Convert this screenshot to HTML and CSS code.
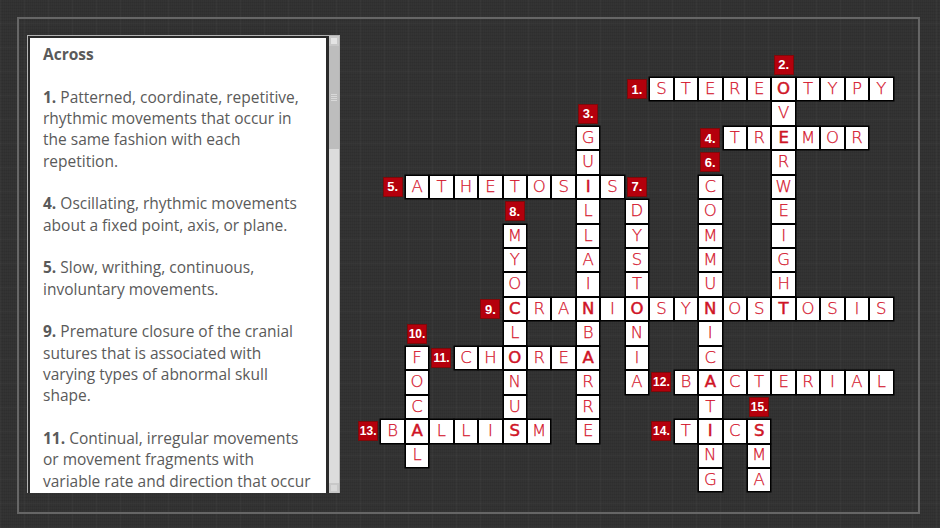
FILE: index.html
```html
<!DOCTYPE html>
<html lang="en">
<head>
    <meta charset="UTF-8">
    <meta name="viewport" content="width=device-width, initial-scale=1.0">
    <title>Crossword</title>
    <link rel="stylesheet" href="styles.css">
</head>
<body>
    <div class="chalkboard">
        <div class="frame">
            <div class="clues">
                <div class="clue-text">
                    <p><b>Across</b></p>
                    <p><b>1.</b> Patterned, coordinate, repetitive, rhythmic movements that occur in the same fashion with each repetition.</p>
                    <p><b>4.</b> Oscillating, rhythmic movements about a fixed point, axis, or plane.</p>
                    <p><b>5.</b> Slow, writhing, continuous, involuntary movements.</p>
                    <p><b>9.</b> Premature closure of the cranial sutures that is associated with varying types of abnormal skull shape.</p>
                    <p><b>11.</b> Continual, irregular movements or movement fragments with variable rate and direction that occur</p>
                </div>
                <div class="scrollbar">
                    <div class="scroll-btn"></div>
                    <div class="scroll-thumb"><span class="grip"></span></div>
                    <div class="scroll-track"></div>
                    <div class="scroll-btn end"></div>
                </div>
            </div>

            <div class="board">
                <span class="num r2 c12">1.</span>
                <span class="num r1 c18">2.</span>
                <span class="num r3 c10">3.</span>
                <span class="num r4 c15">4.</span>
                <span class="num r6 c2">5.</span>
                <span class="num r5 c15">6.</span>
                <span class="num r6 c12">7.</span>
                <span class="num r7 c7">8.</span>
                <span class="num r11 c6">9.</span>
                <span class="num r12 c3">10.</span>
                <span class="num r13 c4">11.</span>
                <span class="num r14 c13">12.</span>
                <span class="num r16 c1">13.</span>
                <span class="num r16 c13">14.</span>
                <span class="num r15 c17">15.</span>

                <span class="cell r2 c13">S</span><span class="cell r2 c14">T</span><span class="cell r2 c15">E</span><span class="cell r2 c16">R</span><span class="cell r2 c17">E</span><span class="cell cross r2 c18">O</span><span class="cell r2 c19">T</span><span class="cell r2 c20">Y</span><span class="cell r2 c21">P</span><span class="cell r2 c22">Y</span>
                <span class="cell r3 c18">V</span>
                <span class="cell r4 c10">G</span><span class="cell r4 c16">T</span><span class="cell r4 c17">R</span><span class="cell cross r4 c18">E</span><span class="cell r4 c19">M</span><span class="cell r4 c20">O</span><span class="cell r4 c21">R</span>
                <span class="cell r5 c10">U</span><span class="cell r5 c18">R</span>
                <span class="cell r6 c3">A</span><span class="cell r6 c4">T</span><span class="cell r6 c5">H</span><span class="cell r6 c6">E</span><span class="cell r6 c7">T</span><span class="cell r6 c8">O</span><span class="cell r6 c9">S</span><span class="cell cross r6 c10">I</span><span class="cell r6 c11">S</span><span class="cell r6 c15">C</span><span class="cell r6 c18">W</span>
                <span class="cell r7 c10">L</span><span class="cell r7 c12">D</span><span class="cell r7 c15">O</span><span class="cell r7 c18">E</span>
                <span class="cell r8 c7">M</span><span class="cell r8 c10">L</span><span class="cell r8 c12">Y</span><span class="cell r8 c15">M</span><span class="cell r8 c18">I</span>
                <span class="cell r9 c7">Y</span><span class="cell r9 c10">A</span><span class="cell r9 c12">S</span><span class="cell r9 c15">M</span><span class="cell r9 c18">G</span>
                <span class="cell r10 c7">O</span><span class="cell r10 c10">I</span><span class="cell r10 c12">T</span><span class="cell r10 c15">U</span><span class="cell r10 c18">H</span>
                <span class="cell cross r11 c7">C</span><span class="cell r11 c8">R</span><span class="cell r11 c9">A</span><span class="cell cross r11 c10">N</span><span class="cell r11 c11">I</span><span class="cell cross r11 c12">O</span><span class="cell r11 c13">S</span><span class="cell r11 c14">Y</span><span class="cell cross r11 c15">N</span><span class="cell r11 c16">O</span><span class="cell r11 c17">S</span><span class="cell cross r11 c18">T</span><span class="cell r11 c19">O</span><span class="cell r11 c20">S</span><span class="cell r11 c21">I</span><span class="cell r11 c22">S</span>
                <span class="cell r12 c7">L</span><span class="cell r12 c10">B</span><span class="cell r12 c12">N</span><span class="cell r12 c15">I</span>
                <span class="cell r13 c3">F</span><span class="cell r13 c5">C</span><span class="cell r13 c6">H</span><span class="cell cross r13 c7">O</span><span class="cell r13 c8">R</span><span class="cell r13 c9">E</span><span class="cell cross r13 c10">A</span><span class="cell r13 c12">I</span><span class="cell r13 c15">C</span>
                <span class="cell r14 c3">O</span><span class="cell r14 c7">N</span><span class="cell r14 c10">R</span><span class="cell r14 c12">A</span><span class="cell r14 c14">B</span><span class="cell cross r14 c15">A</span><span class="cell r14 c16">C</span><span class="cell r14 c17">T</span><span class="cell r14 c18">E</span><span class="cell r14 c19">R</span><span class="cell r14 c20">I</span><span class="cell r14 c21">A</span><span class="cell r14 c22">L</span>
                <span class="cell r15 c3">C</span><span class="cell r15 c7">U</span><span class="cell r15 c10">R</span><span class="cell r15 c15">T</span>
                <span class="cell r16 c2">B</span><span class="cell cross r16 c3">A</span><span class="cell r16 c4">L</span><span class="cell r16 c5">L</span><span class="cell r16 c6">I</span><span class="cell cross r16 c7">S</span><span class="cell r16 c8">M</span><span class="cell r16 c10">E</span><span class="cell r16 c14">T</span><span class="cell cross r16 c15">I</span><span class="cell r16 c16">C</span><span class="cell cross r16 c17">S</span>
                <span class="cell r17 c3">L</span><span class="cell r17 c15">N</span><span class="cell r17 c17">M</span>
                <span class="cell r18 c15">G</span><span class="cell r18 c17">A</span>
            </div>
        </div>
    </div>
</body>
</html>
```
FILE: styles.css
```css
/* Chalkboard background */
body {
    margin: 0;
    background-color: #343434;
    font-family: "Open Sans", Arial, sans-serif;
}
.chalkboard {
    box-sizing: border-box;
    width: 940px;
    height: 528px;
    padding: 17px 20px 14px 17px;
    background-color: #343434;
    background-image:
        repeating-linear-gradient(0deg, rgba(255,255,255,0.03) 0 1px, transparent 1px 24px),
        repeating-linear-gradient(90deg, rgba(255,255,255,0.03) 0 1px, transparent 1px 24px),
        repeating-linear-gradient(0deg, rgba(0,0,0,0.06) 0 1px, transparent 1px 3px),
        repeating-linear-gradient(90deg, rgba(0,0,0,0.05) 0 1px, transparent 1px 2px);
}
.frame {
    box-sizing: border-box;
    height: 497px;
    padding: 16px 0 0 8px;
    border: 2px solid #666;
    display: flex;
    align-items: flex-start;
}

/* Clue list */
.clues {
    box-sizing: border-box;
    width: 315px;
    height: 458px;
    display: flex;
    border: 1px solid #b4b4b4;
    border-bottom: 0;
    background: #2a2a2a;
}
.clue-text {
    flex: 1;
    overflow: hidden;
    margin: 2px 3px 0 2px;
    padding: 6px 14px 0 13px;
    background: #fff;
    color: #5a5a5a;
    font-size: 15.5px;
    line-height: 21.33px;
}
.clue-text p {
    margin: 0 0 21.33px;
}
.scrollbar {
    width: 10px;
    display: flex;
    flex-direction: column;
    background: #dcdcdc;
}
.scroll-btn {
    height: 10px;
    background: #e4e4e4;
    border: 2px solid #c8c8c8;
    box-sizing: border-box;
}
.scroll-btn.end {
    background: #d8d8d8;
}
.scroll-thumb {
    height: 103px;
    background: #bdbdbd;
    display: flex;
    align-items: center;
    justify-content: center;
}
.grip {
    width: 6px;
    height: 7px;
    background: repeating-linear-gradient(0deg, #d8d8d8 0 1px, transparent 1px 2px);
}
.scroll-track {
    flex: 1;
}

/* Crossword grid */
.board {
    margin: 17.5px 0 0 16px;
    display: grid;
    grid-template-columns: repeat(23, 24.45px);
    grid-template-rows: repeat(18, 24.45px);
}
.cell {
    box-sizing: border-box;
    display: flex;
    align-items: center;
    justify-content: center;
    background: #fff;
    border: 1px solid #000;
    box-shadow: 0 0 0 0.5px #000;
    color: #d4142c;
    font-family: "DejaVu Sans", sans-serif;
    font-size: 16.5px;
    font-weight: 200;
    line-height: 1;
    -webkit-text-stroke: 0.25px #d4142c;
}
.cross {
    font-weight: 400;
    color: #cf1426;
    -webkit-text-stroke: 0.5px #cf1426;
}
.num {
    place-self: center;
    box-sizing: border-box;
    width: 20px;
    height: 20px;
    display: flex;
    align-items: center;
    justify-content: center;
    background: #b4000c;
    border: 1px solid #7c0a0a;
    color: #fff;
    font-family: "Liberation Sans", Arial, sans-serif;
    font-size: 13px;
    font-weight: 700;
}
.num.c3, .num.c4, .num.c13, .num.c1, .num.c17 {
    font-size: 12px;
}

/* grid placement */
.r1 { grid-row: 1; } .r2 { grid-row: 2; } .r3 { grid-row: 3; }
.r4 { grid-row: 4; } .r5 { grid-row: 5; } .r6 { grid-row: 6; }
.r7 { grid-row: 7; } .r8 { grid-row: 8; } .r9 { grid-row: 9; }
.r10 { grid-row: 10; } .r11 { grid-row: 11; } .r12 { grid-row: 12; }
.r13 { grid-row: 13; } .r14 { grid-row: 14; } .r15 { grid-row: 15; }
.r16 { grid-row: 16; } .r17 { grid-row: 17; } .r18 { grid-row: 18; }
.c1 { grid-column: 1; } .c2 { grid-column: 2; } .c3 { grid-column: 3; }
.c4 { grid-column: 4; } .c5 { grid-column: 5; } .c6 { grid-column: 6; }
.c7 { grid-column: 7; } .c8 { grid-column: 8; } .c9 { grid-column: 9; }
.c10 { grid-column: 10; } .c11 { grid-column: 11; } .c12 { grid-column: 12; }
.c13 { grid-column: 13; } .c14 { grid-column: 14; } .c15 { grid-column: 15; }
.c16 { grid-column: 16; } .c17 { grid-column: 17; } .c18 { grid-column: 18; }
.c19 { grid-column: 19; } .c20 { grid-column: 20; } .c21 { grid-column: 21; }
.c22 { grid-column: 22; }
```
